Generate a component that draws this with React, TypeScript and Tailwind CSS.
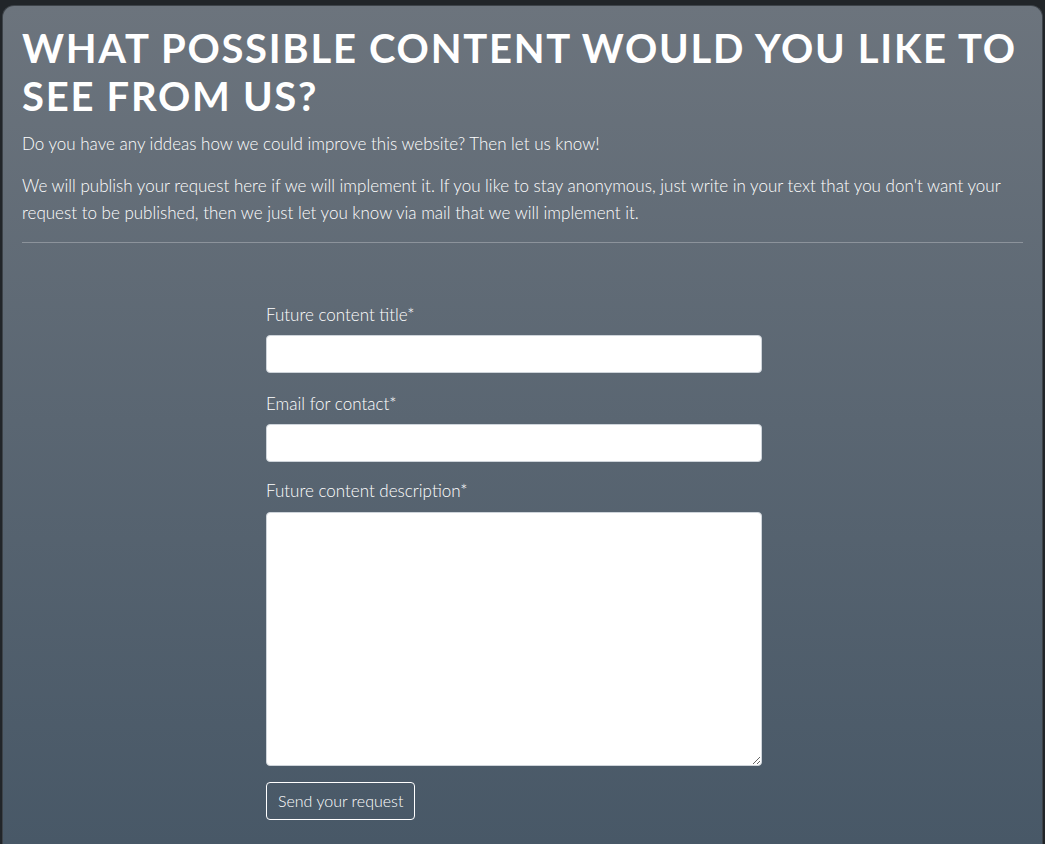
export default function App() {
  return (
    <div
      className="min-h-[844px] bg-[#212529] pt-[5px] px-[2px]"
      style={{ fontFamily: "Lato, 'Open Sans', sans-serif" }}
    >
      <div className="min-h-[839px] rounded-t-[12px] border border-b-0 border-[#3d4349] bg-gradient-to-b from-[#6c747d] to-[#485867] px-[19px] pt-[18px] pb-6 text-white">
        <h1 className="text-[40px] font-bold leading-[48px] tracking-[0.043em] uppercase">
          What possible content would you like to see from us?
        </h1>
        <p className="mt-[10px] text-[17px] font-light leading-[27px]">
          Do you have any iddeas how we could improve this website? Then let us know!
        </p>
        <p className="mt-[15px] text-[17px] font-light leading-[27px]">
          We will publish your request here if we will implement it. If you like to stay anonymous, just write in your text
          that you don't want your request to be published, then we just let you know via mail that we will implement it.
        </p>
        <hr className="mt-[16px] border-t border-[#8c939b]" />

        <form className="ml-[244px] mt-[60px] w-[496px]" onSubmit={(e) => e.preventDefault()}>
          <label className="block text-[17px] font-light leading-6">Future content title*</label>
          <input
            type="text"
            className="mt-[8px] block h-[38px] w-full rounded-[4px] border border-[#ced4da] bg-white px-3 text-black"
          />
          <label className="mt-[19px] block text-[17px] font-light leading-6">Email for contact*</label>
          <input
            type="email"
            className="mt-[8px] block h-[38px] w-full rounded-[4px] border border-[#ced4da] bg-white px-3 text-black"
          />
          <label className="mt-[17px] block text-[17px] font-light leading-6">Future content description*</label>
          <textarea className="mt-[9px] block h-[254px] w-full rounded-[4px] border border-[#ced4da] bg-white px-3 py-2 text-black" />
          <button
            type="submit"
            className="mt-[16px] h-[38px] rounded-[4px] border border-white px-[11px] text-[16px] font-light text-white"
          >
            Send your request
          </button>
        </form>
      </div>
    </div>
  );
}
